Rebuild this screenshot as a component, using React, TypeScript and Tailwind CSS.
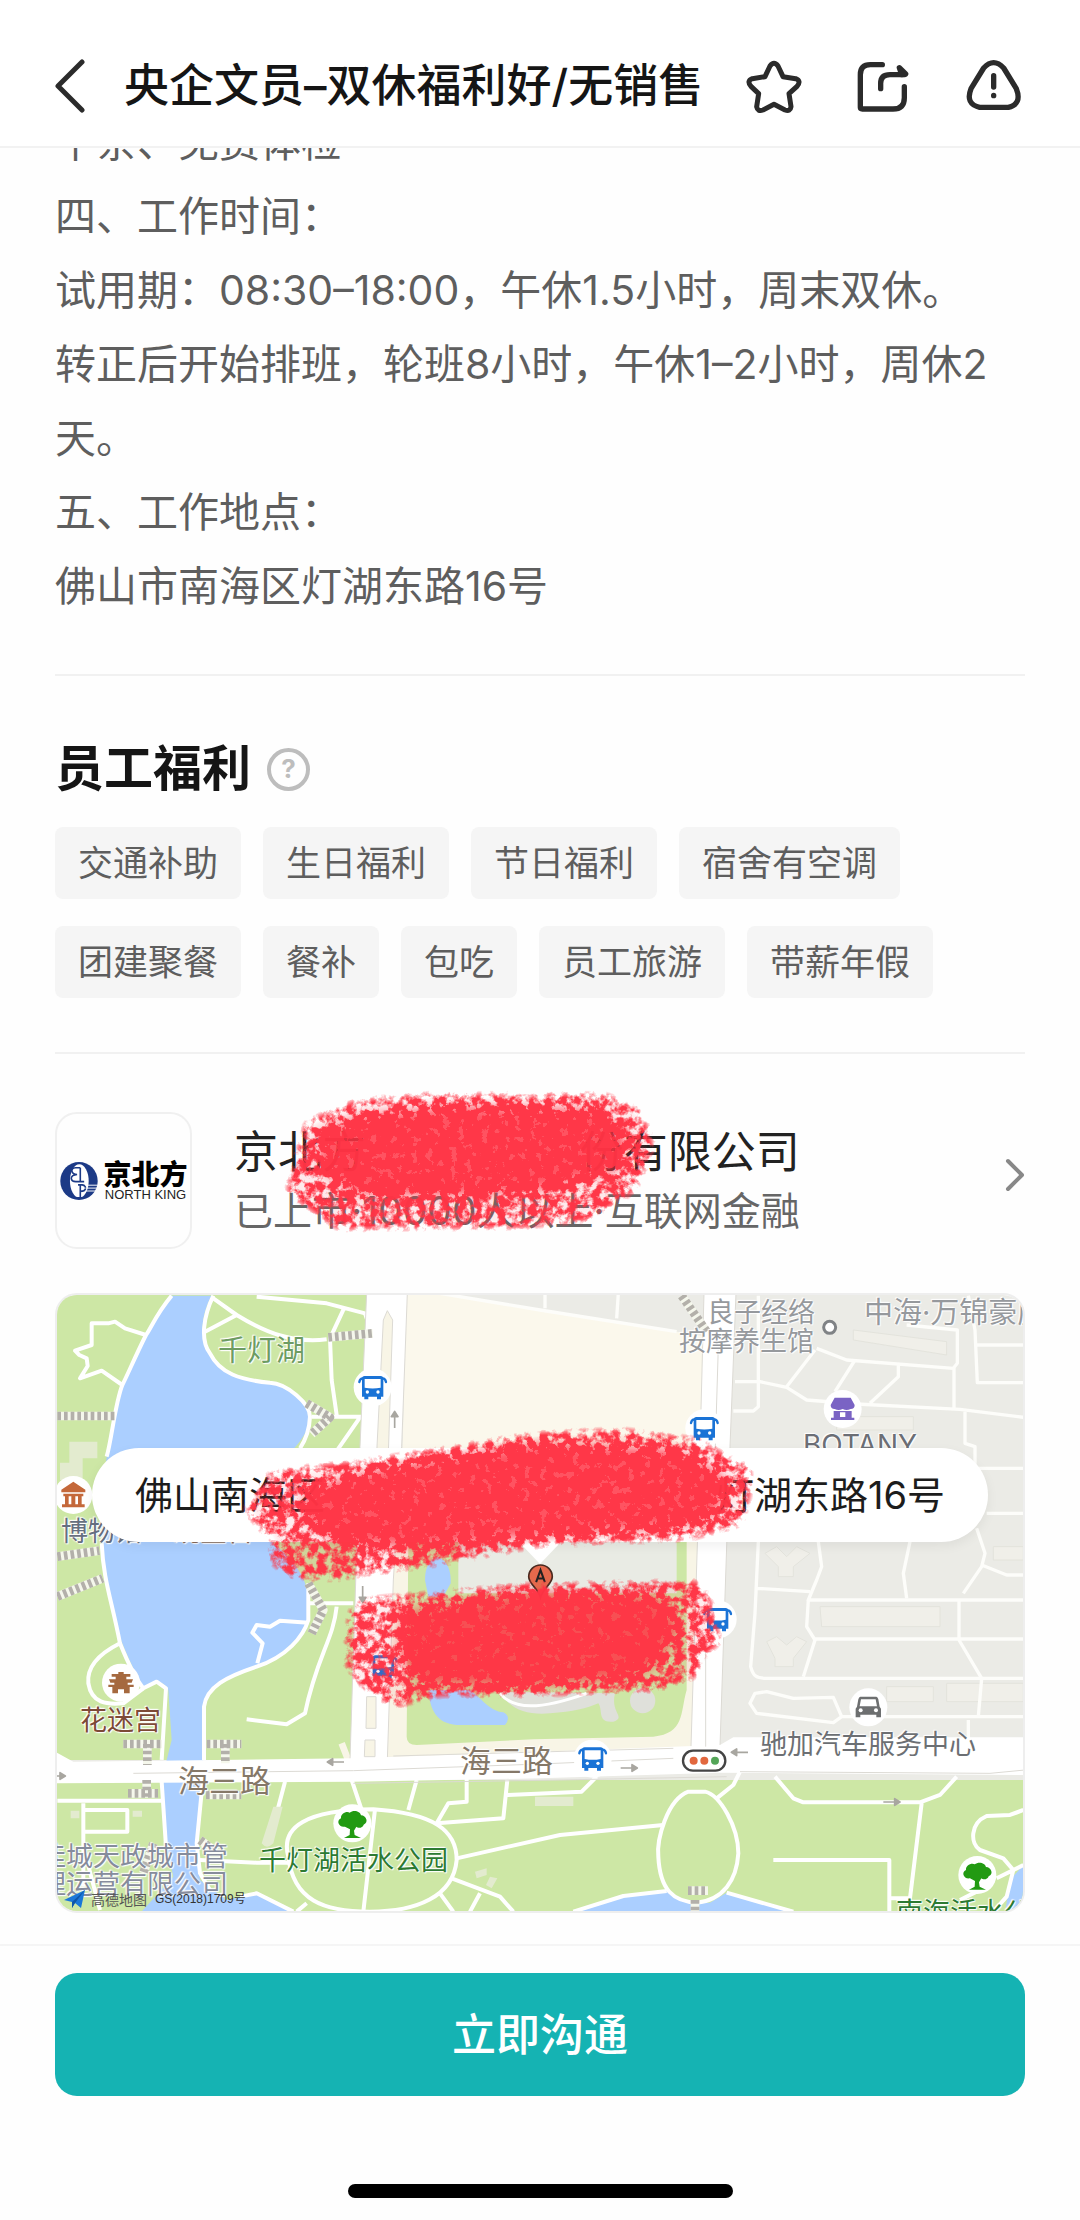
import React from 'react'
import { clsx } from 'clsx'

const description = [
    '午茶、免费体检',
    '四、工作时间：',
    '试用期：08:30–18:00，午休1.5小时，周末双休。',
    '转正后开始排班，轮班8小时，午休1–2小时，周休2天。',
    '五、工作地点：',
    '佛山市南海区灯湖东路16号',
]

const benefits = ['交通补助', '生日福利', '节日福利', '宿舍有空调', '团建聚餐', '餐补', '包吃', '员工旅游', '带薪年假']

const mapLabels = [
    { text: '千灯湖', className: 'left-[161px] top-[42px] text-[29px] text-[#6d9c62]' },
    { text: '良子经络', className: 'left-[650px] top-[4px] text-[27px] text-[#96999d]' },
    { text: '按摩养生馆', className: 'left-[622px] top-[33px] text-[27px] text-[#96999d]' },
    { text: '中海·万锦豪庭', className: 'left-[807px] top-[4px] text-[29px] text-[#96999d]' },
    { text: 'BOTANY', className: 'left-[746px] top-[136px] text-[28px] text-[#6b6e75]' },
    { text: '博物馆', className: 'left-[4px] top-[223px] text-[27px] text-[#666f80]' },
    { text: '观星台', className: 'left-[116px] top-[223px] text-[27px] text-[#85695a]' },
    { text: '花迷宫', className: 'left-[23px] top-[412px] text-[27px] text-[#7d4a36]' },
    { text: '海三路', className: 'left-[121px] top-[472px] text-[31px] text-[#857868]' },
    { text: '海三路', className: 'left-[403px] top-[452px] text-[31px] text-[#857868]' },
    { text: '驰加汽车服务中心', className: 'left-[703px] top-[436px] text-[27px] text-[#6c6f73]' },
    { text: '千灯湖活水公园', className: 'left-[202px] top-[552px] text-[27px] text-[#2c7a32]' },
    { text: '佳城天政城市管', className: 'left-[-18px] top-[548px] text-[27px] text-[#868c9c]' },
    { text: '理运营有限公司', className: 'left-[-18px] top-[576px] text-[27px] text-[#868c9c]' },
    { text: '南海活水公园', className: 'left-[839px] top-[604px] text-[27px] text-[#2c7a32]' },
]

const footPaths = [
    'M52 408H225',
    'M865 172L998 160',
    'M800 370L870 412L815 462',
    'M52 830L178 812',
    'M52 950L188 895',
    'M805 910L850 990L815 1060',
    'M1925 47L2000 155',
    'M250 1392H366M322 1392V1455',
    'M500 1392H604M556 1392V1450',
    'M264 1540H354M320 1500V1550',
    'M498 1545H604',
    'M1944 1832H2004M1965 1860V1895',
    'M340 1690L310 1780M480 1680L520 1710',
]

const parkRoads = [
    'M395 47C350 100 330 150 318 165C290 220 260 290 247 315C225 370 215 480 200 530',
    'M318 165L255 145L225 125L205 130H155V195L105 212L118 225L140 235L143 258L120 295L185 272L247 315',
    'M520 47C490 110 480 180 510 220C540 280 600 300 690 308C740 310 810 370 810 410C808 460 790 490 780 505',
    'M520 55L590 105L495 155M590 105C680 160 760 190 860 178',
    'M650 50L860 70L975 100L985 130M912 85L870 175L875 300L890 405M815 410H985M960 412L885 520',
    'M185 790C190 900 215 960 240 1090C260 1140 290 1200 310 1225L350 1205L378 1225L365 1440',
    'M240 1090C180 1120 140 1160 145 1210C155 1270 200 1275 250 1270L310 1225',
    'M805 910V1020C790 1070 740 1130 650 1160C560 1190 500 1220 492 1280V1440',
    'M805 1028L720 1022L690 1040L650 1035L637 1058L668 1090L652 1150',
    'M805 970H940M890 980C880 1080 830 1130 795 1300L740 1333L620 1318',
    'M365 1505L378 1700M488 1505L470 1690L480 1780L510 1830',
    'M52 1562H365M130 1570V1820M130 1590H262V1655H130M130 1700L180 1890',
    'M735 1505L710 1600M935 1500L965 1590',
    'M745 1730C720 1640 800 1590 1000 1588C1180 1600 1250 1650 1250 1740C1240 1850 1130 1895 990 1895C850 1895 760 1860 745 1730Z',
    'M1005 1588L970 1895M480 1740L650 1748H745M1250 1735L1560 1665L1870 1635',
    'M1130 1500L1105 1590M1280 1495V1565L1225 1570L1190 1630L1390 1615L1402 1500M1402 1545L1625 1535L1670 1490',
    'M1235 1795L1380 1850L1420 1895M1200 1840L1240 1895M1320 1840L1290 1895M600 1850L650 1840L760 1895M800 1870L770 1895',
    'M1945 1535C1880 1560 1850 1680 1855 1730C1860 1830 1900 1865 1970 1868C2050 1860 2090 1800 2095 1720C2095 1640 2040 1545 1995 1535Z',
    'M2030 1555L2080 1515L2100 1475M1600 1895L1750 1848L1880 1833M2060 1838L2260 1895',
    'M2205 1490L2260 1555L2290 1567H2640L2700 1545L2750 1490M2645 1570L2610 1855H2548M2200 1740H2548V1895',
    'M2950 1590L2910 1605L2840 1608C2790 1630 2790 1690 2820 1710L2890 1735L2920 1770L2900 1850L2860 1895M2870 1795L2950 1755M2760 1860L2810 1835',
]

const streetRoads = [
    'M1200 40L1500 90L1910 155M1515 40V85M1735 40L1730 115',
    'M2155 47V380L2140 393H2080M2085 305H2160L2240 322L2300 360L2450 372L2760 388L2950 412',
    'M2330 205L2420 240L2740 265L2752 250V150L2600 135M2325 210L2240 320M2445 240L2385 335M2575 250V290L2490 370M2742 265V385',
    'M2785 47L2805 150L2812 308H2950M2805 195H2950M2775 395V490L2805 500V565H2950M2840 700H2950',
    'M2155 785L2145 1000L2132 1160C2140 1190 2150 1195 2180 1195H2950M2150 925L2310 935M2335 785L2345 860L2330 900L2305 960H2950',
    'M2305 960L2300 1040L2325 1080L2290 1190M2325 1077H2950M2610 785L2590 880L2600 955M2757 960V1080L2825 1195L2815 1310',
    'M2810 745L2835 820L2825 860L2770 940M2825 855L2900 885H2950M2785 1320V1375',
    'M2130 1270L2145 1240L2180 1235L2260 1255L2380 1252L2405 1310L2380 1328L2150 1300ZM2405 1310H2950',
]

const Crayon: React.FC<{ id: string; edge: string; core: string; viewBox: string; className: string }> = ({ id, edge, core, viewBox, className }) => (
    <svg viewBox={viewBox} className={clsx('pointer-events-none absolute', className)} aria-hidden="true">
        <defs>
            <filter id={id} x="-10%" y="-20%" width="120%" height="140%" colorInterpolationFilters="sRGB">
                <feGaussianBlur in="SourceAlpha" stdDeviation="16" result="soft" />
                <feTurbulence type="fractalNoise" baseFrequency="0.042" numOctaves="4" seed="11" />
                <feColorMatrix values="0 0 0 0 0  0 0 0 0 0  0 0 0 0 0  0 0 0 3.2 -1.1" result="grain" />
                <feComposite in="soft" in2="grain" operator="arithmetic" k1="1" k2="0.82" />
                <feComponentTransfer result="mask">
                    <feFuncA type="linear" slope="2.1" intercept="-0.86" />
                </feComponentTransfer>
                <feFlood floodColor="#ff3344" floodOpacity="0.98" />
                <feComposite in2="mask" operator="in" />
            </filter>
        </defs>
        <g filter={`url(#${id})`}>
            <path d={edge} opacity="0.56" />
            <path d={core} />
        </g>
    </svg>
)

const Pin: React.FC<{ x: number; y: number; children: React.ReactNode }> = ({ x, y, children }) => (
    <g transform={`translate(${x} ${y})`}>
        <circle r="57" fill="#fff" />
        {children}
    </g>
)

const Bus = () => (
    <g fill="#1a73d6">
        <path d="M-24 -34H24Q32 -34 32 -26V28H25V36H13V28H-13V36H-25V28H-32V-26Q-32 -34 -24 -34Z" />
        <path d="M-30 -27Q-38 -27 -40 -16M30 -27Q38 -27 40 -16" fill="none" stroke="#1a73d6" strokeWidth="7" strokeLinecap="round" />
        <path d="M-24 -25H24V1Q0 6 -24 1Z" fill="#fff" />
        <circle cx="-16" cy="14" r="5" fill="#fff" />
        <circle cx="16" cy="14" r="5" fill="#fff" />
    </g>
)

const Tree = () => (
    <path
        fill="#229a12"
        d="M-3 44H-25L-8 35L-7 18L-22 10C-40 14 -50 -8 -34 -15C-36 -30 -16 -38 -8 -32C4 -42 24 -36 26 -24C42 -24 50 -2 34 4C30 16 16 14 12 10L5 22L7 35L26 44Z"
    />
)

const Arrow: React.FC<{ x: number; y: number; rotate: number }> = ({ x, y, rotate }) => (
    <path d="M-24 0H10M10 -10L26 0L10 10Z" transform={`translate(${x} ${y}) rotate(${rotate})`} stroke="#a8a6a0" strokeWidth="5" fill="#a8a6a0" />
)

const MapCanvas = () => (
    <svg className="absolute inset-0 h-full w-full" role="img" aria-label="千灯湖周边地图">
        <g transform="translate(-17 -15) scale(0.33333)" fill="none" strokeLinejoin="round">
            <path d="M0 0H3000V1950H0Z" fill="#ebebe6" />
            <path d="M0 0H985L940 1440H0Z" fill="#cde7a5" />
            <path d="M0 1500H3000V1950H0Z" fill="#cde7a5" />
            <path d="M88 485H172V535H128V600H60V548H88Z" fill="#e3ebcf" />
            <path d="M1100 40H1200L1500 90L1990 168V790H1080Z" fill="#fbf8ec" />
            <path d="M1040 785H1980V1425H1040Z" fill="#f8f5e6" />
            <path d="M1105 785H1940V1230C1920 1300 1935 1360 1840 1370L1480 1378L1130 1395Q1100 1395 1100 1370Z" fill="#cde7a5" />
            <path d="M1255 785H1910V940H1255Z" fill="#e9ebe4" />
            <path d="M1155 900Q1155 840 1195 830Q1235 850 1232 910L1210 950H1165Z" fill="#abcfff" />
            <path d="M1165 1230C1170 1290 1190 1330 1250 1335H1395Q1415 1310 1390 1297C1350 1295 1320 1250 1290 1230Z" fill="#abcfff" />
            <path d="M1380 1235C1410 1290 1460 1305 1530 1300C1600 1295 1640 1285 1675 1270C1690 1290 1670 1330 1720 1325C1760 1310 1710 1300 1725 1240Z" fill="#dfe0da" />
            <circle cx="1808" cy="1262" r="38" fill="#dfe0da" />
            <path d="M1380 1240C1420 1290 1500 1290 1640 1240" stroke="#fff" strokeWidth="9" />

            <path
                d="M390 47H515C480 110 480 180 510 220C540 280 600 300 690 308C740 310 810 370 810 410C808 450 780 500 700 560V790C760 840 790 880 805 940V1020C790 1060 740 1120 650 1165C560 1190 500 1220 492 1280L488 1500C490 1560 470 1650 472 1700L480 1800L560 1860L650 1840L760 1900H300L400 1790L380 1700L365 1500L395 1380L385 1230C370 1200 340 1200 310 1225C280 1170 250 1100 235 1060L200 900C185 850 180 700 200 530C230 380 250 280 320 160Z"
                fill="#abcfff"
            />
            <path d="M1600 1900C1700 1850 1800 1840 1880 1833L1940 1868H2010L2060 1838L2260 1900Z" fill="#abcfff" />
            <path d="M2955 1750L2910 1800L2895 1900H2955Z" fill="#abcfff" />

            <g fill="#f0efe9" stroke="#e3e3dc" strokeWidth="3">
                <path d="M2440 150L2720 185V225L2440 180ZM2390 410H2620V450H2390ZM2340 980H2700V1040H2345ZM2540 1220H2680V1265H2540ZM2720 1210H2950V1265H2720Z" />
                <path d="M2175 820L2210 800L2240 830L2270 800L2310 820L2260 860V890H2215V860ZM2860 800H2950V840H2860ZM2180 1085L2210 1070L2240 1095L2270 1070L2300 1085L2260 1135V1160H2205V1135Z" />
            </g>

            <g stroke="#fff" strokeWidth="12">
                {parkRoads.map((d) => (
                    <path key={d} d={d} />
                ))}
            </g>
            <g stroke="#fdfdfa" strokeWidth="10">
                {streetRoads.map((d) => (
                    <path key={d} d={d} />
                ))}
            </g>
            <path d="M905 1390L940 1480M1050 1340L1040 1420H1930L1960 1380" stroke="#f8f5e6" strokeWidth="20" />

            {/* main roads */}
            <path d="M980 40H1102L1085 500L1060 900L1042 1440H930L960 500Z" fill="#fff" stroke="#dcdad4" strokeWidth="3" />
            <path d="M1992 40H2088L2070 500L2040 1400H1953L1975 700Z" fill="#fff" stroke="#dcdad4" strokeWidth="3" />
            <path d="M45 1415L100 1445L940 1435L1500 1415L2040 1395L2080 1372H2955V1485L2040 1478L1500 1495L940 1505L45 1510Z" fill="#fff" />
            <path d="M1030 120L1042 92L1058 120L1045 520H1010ZM980 1250H1008V1345H978ZM975 1380H1005V1430H973Z" fill="#f8f5e6" stroke="#dcdad4" strokeWidth="3" />
            <path d="M2035 200L2020 700M1997 1100V1400M280 1480L940 1472L1500 1452L1900 1435M1060 1428L1900 1405M940 1510L1560 1500L2060 1490M2100 1475L2850 1480L2955 1470" stroke="#dcdad4" strokeWidth="3" />

            <g strokeWidth="26">
                {footPaths.map((d) => (
                    <g key={d}>
                        <path d={d} stroke="#f5f7ec" />
                        <path d={d} stroke="#b3b0aa" strokeDasharray="11 9" />
                    </g>
                ))}
            </g>

            <path d="M700 1580L728 1580L700 1690Q680 1710 665 1690ZM1485 1550H1600V1578H1485ZM92 1592H118V1615H92ZM278 1592H306V1610H278ZM1305 1775L1340 1765V1785L1310 1795ZM1350 1790L1372 1795L1355 1825L1338 1815Z" fill="#e3ebcf" />

            <Arrow x={1064} y={420} rotate={-90} />
            <Arrow x={968} y={942} rotate={90} />
            <Arrow x={888} y={1446} rotate={180} />
            <Arrow x={50} y={1488} rotate={0} />
            <Arrow x={1766} y={1464} rotate={0} />
            <Arrow x={2100} y={1417} rotate={180} />
            <Arrow x={2554} y={1566} rotate={0} />

            <circle cx="2369" cy="142" r="18" stroke="#808386" strokeWidth="9" fill="#fff" />

            <Pin x={998} y={322}><Bus /></Pin>
            <Pin x={1993} y={445}><Bus /></Pin>
            <Pin x={2033} y={1018}><Bus /></Pin>
            <Pin x={1030} y={1160}><Bus /></Pin>
            <Pin x={1658} y={1436}><Bus /></Pin>
            <Pin x={937} y={1630}><Tree /></Pin>
            <Pin x={2812} y={1785}><Tree /></Pin>
            <Pin x={2408} y={387}>
                <path d="M-24 -34H24L36 -12Q36 0 24 0Q12 6 0 0Q-12 6 -24 0Q-36 0 -36 -12ZM-27 6H27V26H35V33H-35V26H-27ZM-8 10V24H8V10Z" fill="#7a63c4" fillRule="evenodd" />
            </Pin>
            <Pin x={100} y={645}>
                <path d="M0 -40L36 -16V-8H-36V-16ZM-30 -4H30V4H-30ZM-25 4H-14V30H-25ZM-6 4H6V30H-6ZM14 4H25V30H14ZM-34 28H34V37H-34Z" fill="#c4683a" />
            </Pin>
            <Pin x={243} y={1208}>
                <path d="M-8 -32H8V-26H28V-18H-28V-26H-8ZM-16 -18H16V-10H36L32 0H-32L-36 -10H-16ZM-20 0H20V6H38V13H-38V6H-20ZM-26 13H26V32H9V20H-9V32H-26Z" fill="#a5693f" />
            </Pin>
            <Pin x={2485} y={1282}>
                <path d="M-24 -32H24Q28 -32 30 -24L34 -2L38 4V30H24V22H-24V30H-38V4L-34 -2L-30 -24Q-28 -32 -24 -32ZM-22 -24L-26 -3H26L22 -24Z" fill="#6d6f70" fillRule="evenodd" />
                <circle cx="-23" cy="9" r="6" fill="#fff" />
                <circle cx="23" cy="9" r="6" fill="#fff" />
            </Pin>
            <rect x="1929" y="1412" width="127" height="60" rx="30" fill="#fff" stroke="#444" strokeWidth="7" />
            <circle cx="1961" cy="1442" r="12" fill="#e2683f" />
            <circle cx="1993" cy="1442" r="12" fill="#e2683f" />
            <circle cx="2025" cy="1442" r="12" fill="#54a558" />
        </g>
    </svg>
)

const JobMap = () => (
    <section className="relative mt-[44px] h-[620px] overflow-hidden rounded-[22px] border-2 border-[#eeeeee]" aria-label="工作地点">
        <MapCanvas />
        {mapLabels.map((label) => (
            <span
                key={label.className}
                className={clsx('absolute whitespace-nowrap leading-7 [text-shadow:0_0_2px_#fff,0_0_2px_#fff,1px_1px_1px_#fff,-1px_-1px_1px_#fff]', label.className)}
            >
                {label.text}
            </span>
        ))}
        <div className="absolute bottom-0 left-1.5 flex items-center text-[#333]">
            <svg viewBox="0 0 24 24" className="mr-1 size-6" aria-hidden="true">
                <path d="M1 13L22 3L18 21L12 16L9 21V15Z" fill="#1b78d8" />
                <path d="M9 15L22 3L12 16L9 21Z" fill="#0e56a8" />
            </svg>
            <span className="text-[14px] text-[#555]">高德地图</span>
            <span className="ml-2 font-['Liberation_Sans','Noto_Sans_CJK_SC',sans-serif] text-[12px]">GS(2018)1709号</span>
        </div>
        <div className="absolute inset-x-[35px] top-[153px] flex h-[94px] items-center justify-between rounded-full bg-white px-[43px] text-[38px] text-[#1c1c1c] shadow-[0_4px_12px_rgba(0,0,0,0.06)]">
            <span>佛山南海区</span>
            <span>灯湖东路16号</span>
        </div>
        <svg viewBox="0 0 42 22" className="absolute left-[462px] top-[247px] h-[22px] w-[42px]" aria-hidden="true">
            <path d="M0 0H42L21 22Z" fill="#fff" />
        </svg>
        <svg viewBox="-40 -50 80 110" className="absolute left-[470px] top-[269px] h-[37px] w-[27px]" aria-hidden="true">
            <path d="M0 50C-8 20 -35 10 -35 -12A35 35 0 0 1 35 -12C35 10 8 20 0 50Z" fill="#e4694c" stroke="#4b2a20" strokeWidth="5" />
            <path d="M-13 4L0 -32L13 4M-8 -7H8" fill="none" stroke="#222" strokeWidth="6" />
        </svg>
        <Crayon
            id="crayon-address"
            viewBox="51 45 2898 1848"
            className="inset-0 h-full w-full"
            edge="M600 690L690 565L1000 530L1500 450L1750 440L1980 470L2080 530L2140 560V640L2110 740L1950 785L1500 805L1200 860L900 905L760 905L680 850L690 790Z"
            core="M800 630L1050 560L1500 490L1900 510L2040 580L2060 630L2020 710L1900 740L1450 770L1150 800L900 790L790 710Z"
        />
        <Crayon
            id="crayon-building"
            viewBox="51 45 2898 1848"
            className="inset-0 h-full w-full"
            edge="M920 990L960 950L1450 905L1980 895L2020 960L2050 1090L1990 1140L1980 1195L1850 1240L1450 1255L1200 1255L1060 1290L950 1220L905 1150Z"
            core="M1090 1000L1450 940L1850 950L1920 1040L1850 1150L1780 1190L1450 1220L1150 1210L1080 1130Z"
        />
    </section>
)

const Company = () => (
    <a href="#company" className="relative mt-[58px] flex items-center">
        <div className="flex h-[137px] w-[137px] shrink-0 items-center justify-center rounded-[22px] border-2 border-[#f0f0f0]">
            <svg viewBox="56 186 120 124" className="size-10 shrink-0" aria-hidden="true">
                <ellipse cx="116" cy="248" rx="58" ry="59" fill="#1c3a86" />
                <ellipse cx="117" cy="248" rx="29" ry="52" fill="#fff" />
                <path d="M120 207H105Q92 208 94 218Q97 228 110 228Q92 230 92 240Q93 250 106 250H120V207M120 250H132M113 260H126Q138 262 136 272Q134 280 120 280M120 260V300M110 300H130" fill="none" stroke="#1c3a86" strokeWidth="5" />
                <path d="M136 261H176M136 270H172M136 279H170" stroke="#fff" strokeWidth="3" />
            </svg>
            <div className="ml-1 text-center">
                <div className="text-[28px] font-black leading-7 text-black">京北方</div>
                <div className="whitespace-nowrap font-['Liberation_Sans',sans-serif] text-[13px] leading-3 text-[#222]">NORTH KING</div>
            </div>
        </div>
        <div className="ml-[42px]">
            <div className="flex justify-between text-[44px] leading-[60px] text-[#222]">
                <span>京北方</span>
                <span>份有限公司</span>
            </div>
            <div className="text-[39px] leading-[58px] text-[#666]">已上市·10000人以上·互联网金融</div>
        </div>
        <svg viewBox="0 0 20 34" className="mb-3 ml-auto h-[34px] w-5" fill="none" stroke="#888" strokeWidth="4" strokeLinecap="round" strokeLinejoin="round" aria-hidden="true">
            <path d="M3 3L17 17L3 31" />
        </svg>
        <Crayon
            id="crayon-company"
            viewBox="0 -60 1560 600"
            className="left-[165px] top-[-52px] h-[200px] w-[520px]"
            edge="M400 55L600 35H1160L1270 85L1310 200L1250 340L1100 430L900 450L350 455L190 340L220 230L250 120Z"
            core="M420 110L700 80L1130 90L1220 180L1190 270L950 330L700 345L400 340L300 260V160Z"
        />
    </a>
)

const Header = () => (
    <header className="relative z-10 flex h-[148px] items-center border-b-2 border-[#f2f2f2] bg-white pl-[54px] pr-[56px] pt-[26px]">
        <button type="button" aria-label="返回" className="shrink-0">
            <svg viewBox="0 0 32 54" className="h-[54px] w-8" fill="none" stroke="#2b2b2b" strokeWidth="5" strokeLinecap="round" strokeLinejoin="round">
                <path d="M28 3L4 27L28 51" />
            </svg>
        </button>
        <h1 className="ml-[38px] whitespace-nowrap text-[45px] font-medium text-[#151515]">央企文员–双休福利好/无销售</h1>
        <div className="ml-auto flex shrink-0 gap-[50px]">
            <button type="button" aria-label="收藏">
                <svg viewBox="67 57 180 165" className="h-[55px] w-[60px]" fill="none" stroke="#2b2b2b" strokeWidth="15" strokeLinejoin="round">
                    <path d="M145 78Q157 62 169 78L184 110L222 116Q240 123 226 139L202 161L208 200Q206 216 190 210L157 193L124 210Q108 216 105 200L111 161L88 139Q74 123 92 116L130 110Z" />
                </svg>
            </button>
            <button type="button" aria-label="分享">
                <svg viewBox="402 57 180 165" className="h-[55px] w-[60px]" fill="none" stroke="#2b2b2b" strokeWidth="16" strokeLinecap="round" strokeLinejoin="round">
                    <path d="M487 74H451Q421 74 421 104V202Q421 207 427 207H519Q553 207 553 173V140" />
                    <path d="M482 146V130Q482 104 510 104H552" />
                    <path d="M538 83L557 102L545 104Z" fill="#2b2b2b" />
                </svg>
            </button>
            <button type="button" aria-label="举报">
                <svg viewBox="729 57 180 165" className="h-[55px] w-[60px]" fill="none" stroke="#2b2b2b" strokeWidth="16" strokeLinecap="round" strokeLinejoin="round">
                    <path d="M788 84Q818 52 848 84L886 146Q904 192 862 202H776Q732 192 750 146Z" />
                    <path d="M818 107V141M818 166V167" />
                </svg>
            </button>
        </div>
    </header>
)

const App: React.FC = () => {
    return (
        <div className="min-h-screen bg-[#fefefe] font-[Inter,'Noto_Sans_CJK_SC',sans-serif]">
            <Header />
            <main className="overflow-hidden px-[55px] pb-[31px]">
                <div className="-mt-[43px] text-[41px] leading-[74px] text-[#5e5e5e]">
                    {description.map((line) => (
                        <p key={line}>{line}</p>
                    ))}
                </div>

                <section className="mt-[51px] border-y-2 border-[#f1f1f1] pb-[54px] pt-[57px]">
                    <div className="flex items-center gap-4">
                        <h2 className="text-[49px] font-bold leading-[72px] text-[#151515]">员工福利</h2>
                        <button type="button" aria-label="福利说明" className="flex h-[43px] w-[43px] items-center justify-center rounded-full border-4 border-[#bdbdbd] text-[26px] font-bold leading-none text-[#bdbdbd]">
                            ?
                        </button>
                    </div>
                    <ul className="mt-[22px] flex flex-wrap gap-x-[22px] gap-y-[27px]">
                        {benefits.map((benefit) => (
                            <li key={benefit} className="rounded-lg bg-[#f5f5f5] px-[23px] text-[35px] leading-[72px] text-[#5e5e5e]">
                                {benefit}
                            </li>
                        ))}
                    </ul>
                </section>

                <Company />
                <JobMap />
            </main>

            <footer className="border-t-2 border-[#f5f5f5] px-[55px] pb-[18px] pt-[27px]">
                <button type="button" className="h-[123px] w-full rounded-[22px] bg-[#15b3b3] text-[44px] font-medium text-white">
                    立即沟通
                </button>
                <div className="mx-auto mt-[88px] h-3.5 w-[385px] rounded-full bg-black"></div>
            </footer>
        </div>
    )
}

export default App
